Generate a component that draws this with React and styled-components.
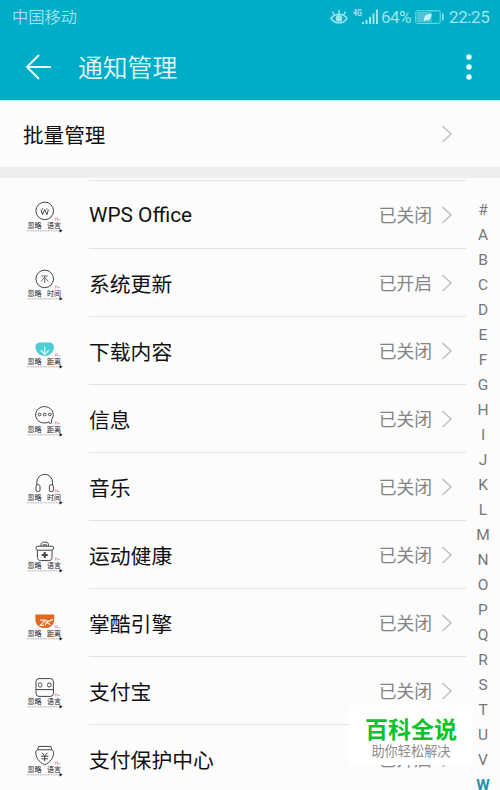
import styled, { createGlobalStyle } from 'styled-components';


const GlobalStyle = createGlobalStyle`
    * {
        box-sizing: border-box;
    }

    body {
        margin: 0;
        background-color: #fcfcfc;
        font-family: Roboto, "Noto Sans CJK SC", sans-serif;
    }
`;

// Styled components

const Screen = styled.div`
    position: relative;
    width: 500px;
    height: 790px;
    overflow: hidden;
    display: flex;
    flex-direction: column;
    background-color: #fcfcfc;
`;

const Header = styled.header`
    flex: none;
    height: 101px;
    background-color: #00adc7;
    border-bottom: 1px solid #a5fbff;
`;

const StatusBar = styled.div`
    height: 34px;
    padding: 0 11px 0 12px;
    display: flex;
    align-items: center;
    color: #9be6ef;
    font-size: 16.5px;
    white-space: nowrap;
`;

const Carrier = styled.span`
    flex: 1;
    padding-top: 2px;
    font-size: 16.3px;
    font-weight: 350;
    line-height: 34px;
`;

const StatusText = styled.span`
    width: ${props => props.$width}px;
    margin-left: ${props => props.$gap}px;
    font-size: 17px;
    line-height: 34px;
    letter-spacing: ${props => props.$spacing || 0}px;
`;

const StatusIcon = styled.svg`
    flex: none;
    margin-left: ${props => props.$gap || 0}px;
`;

const TitleBar = styled.div`
    height: 66px;
    padding: 0 28px 0 25px;
    display: flex;
    align-items: center;
`;

const Title = styled.h1`
    flex: 1;
    margin: 0 0 0 27px;
    padding-top: 4px;
    color: #e3fbfd;
    font-size: 24.8px;
    font-weight: 350;
    line-height: 62px;
`;

const BatchRow = styled.div`
    flex: none;
    height: 66px;
    padding: 0 47px 0 23px;
    display: flex;
    align-items: center;
    justify-content: space-between;
    color: #111;
    font-size: 20.6px;
`;

const Band = styled.div`
    flex: none;
    height: 11px;
    background-color: #eee;
`;

const Content = styled.div`
    flex: 1;
    min-height: 0;
    display: flex;
`;

const List = styled.ul`
    width: 466px;
    margin: 0;
    padding: 2px 0 0;
    list-style: none;
`;

const Row = styled.li`
    height: 68px;
    display: flex;
`;

const AppIcon = styled.svg`
    flex: none;
    margin: 20px 24px 0 25px;
`;

const RowBody = styled.div`
    flex: 1;
    padding: 0 13px 0 0;
    display: flex;
    align-items: center;
    border-top: 1px solid #e2e2e2;
    white-space: nowrap;
`;

const AppName = styled.span`
    flex: 1;
    color: #111;
    font-size: 20.8px;
`;

const State = styled.span`
    margin-right: 9px;
    padding-bottom: 2px;
    color: #858585;
    font-size: 17.8px;
`;

const Index = styled.nav`
    flex: 1;
    padding-top: 20px;
    display: flex;
    flex-direction: column;
    align-items: center;
`;

const Letter = styled.span`
    flex: none;
    height: 25px;
    color: ${props => props.$active ? '#149aa8' : '#777'};
    font-size: 15.5px;
    font-weight: ${props => props.$active ? 700 : 400};
    line-height: 25px;
`;

const Watermark = styled.div`
    position: absolute;
    left: 349px;
    top: 705px;
    width: 124px;
    height: 60px;
    padding-top: 13px;
    display: flex;
    flex-direction: column;
    align-items: center;
    background-color: #fff;
    white-space: nowrap;
`;

const WatermarkName = styled.strong`
    color: #08c22e;
    font-size: 23px;
    font-weight: 700;
    line-height: 25px;
`;

const WatermarkText = styled.span`
    color: #8c8c8c;
    font-size: 13.2px;
    line-height: 17px;
`;


// Drawings for each app, on a 40x34 canvas above the caption

const glyphs = {
    wps: (
        <>
            <circle cx="19.7" cy="10.9" r="8.8" />
            <path d="M16 9.8l1.5 4.8 2.2-5 2.2 5 1.5-4.8M17.6 8.4v1.4M21.8 8.4v1.4" />
        </>
    ),
    update: (
        <>
            <circle cx="19.7" cy="10.9" r="8.8" />
            <path d="M16.5 8h6.4M19.7 8.4v6.4M19.4 9.5l-3.4 4M20 9.5l3.4 4" strokeWidth="0.8" />
        </>
    ),
    download: (
        <>
            <path d="M14.5 6.5h10.4c2.6 0 4.1 2.2 4.1 4.6 0 5-4.4 8.9-9.3 8.9s-9.3-3.9-9.3-8.9c0-2.4 1.5-4.6 4.1-4.6z" fill="#4fcdd3" stroke="none" />
            <path d="M19.7 10.5v8M15.5 14.2l4.2 4.3 4.2-4.3" stroke="#e9ffff" strokeWidth="1.1" />
        </>
    ),
    message: (
        <>
            <path d="M24 17.8a8.8 8.2 0 1 1 2.4-2l.2 2.8-1.2 1.4-1.4-2.2" />
            <circle cx="14.6" cy="10.5" r="1.3" />
            <circle cx="19.7" cy="10.5" r="1.3" />
            <circle cx="24.8" cy="10.5" r="1.3" />
        </>
    ),
    music: (
        <>
            <path d="M11.8 13v-2.6a7.9 8.1 0 0 1 15.8 0V13" />
            <rect x="11" y="12.7" width="4" height="7" rx="1.8" />
            <rect x="24.4" y="12.7" width="4" height="7" rx="1.8" />
        </>
    ),
    health: (
        <>
            <path d="M16 6V4.6c0-1.6 1-2.4 2.4-2.4H21c1.4 0 2.4.8 2.4 2.4V6M18 6V4.8h3.4V6" />
            <rect x="10.9" y="6.2" width="17.8" height="4" rx="2" />
            <path d="M12.4 10.4v7c0 2 1.2 3.2 3.2 3.2h8.2c2 0 3.2-1.2 3.2-3.2v-7" />
            <path d="M19.7 12v6M16.7 15h6" strokeWidth="2" />
        </>
    ),
    engine: (
        <>
            <path d="M10.4 6.4h18.8v4.8c0 5.4-4 8.8-9.4 8.8s-9.4-3.4-9.4-8.8z" fill="#e2661d" stroke="none" />
            <path d="M15 12.2h5.6l-5.2 5.2h3.8M28 11.4l-6.8 3M22.2 12.4l-2 5M21.6 14.4l4 2.4" stroke="#fff3ea" strokeWidth="1.2" />
        </>
    ),
    alipay: (
        <>
            <rect x="11" y="2.6" width="17.4" height="17.8" rx="3" />
            <path d="M11 13.6h17.4" />
            <rect x="13.4" y="7" width="3.4" height="4" rx="1.4" />
            <rect x="22.6" y="7" width="3.4" height="4" rx="1.4" />
        </>
    ),
    protect: (
        <>
            <path d="M13.6 2.4h12.2l1 3.4h-14.2z" />
            <path d="M12.6 5.8l-1.8 1.6c-.4 6 3.2 11 8.9 13.4 5.7-2.4 9.3-7.4 8.9-13.4l-1.8-1.6" />
            <path d="M17 8.8l2.7 3 2.7-3M16 12.2h7.4M16.4 14.8h6.6M19.7 12v5.4" />
        </>
    ),
};

const apps = [
    { name: 'WPS Office', glyph: 'wps', word: '语言', state: '已关闭' },
    { name: '系统更新', glyph: 'update', word: '时间', state: '已开启' },
    { name: '下载内容', glyph: 'download', word: '距离', state: '已关闭' },
    { name: '信息', glyph: 'message', word: '距离', state: '已关闭' },
    { name: '音乐', glyph: 'music', word: '时间', state: '已关闭' },
    { name: '运动健康', glyph: 'health', word: '语言', state: '已关闭' },
    { name: '掌酷引擎', glyph: 'engine', word: '距离', state: '已关闭' },
    { name: '支付宝', glyph: 'alipay', word: '语言', state: '已关闭' },
    { name: '支付保护中心', glyph: 'protect', word: '语言', state: '已开启' },
];

const letters = '#ABCDEFGHIJKLMNOPQRSTUVW'.split('');


function Chevron() {
    return (
        <svg width="12" height="18" viewBox="0 0 12 18" fill="none" stroke="#c2c2c2" strokeWidth="1.6">
            <path d="M1.5 1l8.5 8-8.5 8" />
        </svg>
    );
}

function ThemedIcon({glyph, word}) {
    // Line drawing with the small caption and the arrow under it

    return (
        <AppIcon width="40" height="34" viewBox="0 0 40 34">
            <g fill="none" stroke="#444" strokeWidth="1">
                {glyphs[glyph]}
            </g>
            <path d="M30.4 17.4v3M30.4 18.8l2-.8v2.2M32.6 19.6h2.4" fill="none" stroke="#f0a0ac" strokeWidth="1" />
            <g fill="#222" fontSize="7" fontFamily='"Noto Sans CJK SC", sans-serif'>
                <text x="2.6" y="28.2">忽略</text>
                <text x="22" y="28.2">{word}</text>
            </g>
            <path d="M2 30.8h33" stroke="#aaa" strokeWidth="0.8" strokeDasharray="2 0.6" />
            <path d="M34.6 29l3 1.8-3 1.8z" fill="#111" />
        </AppIcon>
    );
}

function App() {
    return (
        <Screen>
            <GlobalStyle />
            <Header>
                <StatusBar>
                    <Carrier>中国移动</Carrier>
                    <StatusIcon width="18" height="18" viewBox="0 0 18 18" fill="none" stroke="#9be6ef" strokeWidth="1.4">
                        <path d="M1 10.5c2-3 5-4.2 8-4.2s6 1.2 8 4.2c-2 3-5 4.4-8 4.4s-6-1.4-8-4.4z" />
                        <path d="M9 5.8V2M4.4 6.8L2.4 3.6M13.6 6.8l2-3.2" />
                        <circle cx="9" cy="10.4" r="2.6" fill="#9be6ef" />
                    </StatusIcon>
                    <StatusIcon $gap={5} width="26" height="18" viewBox="0 0 26 18" fill="#9be6ef">
                        <text x="0" y="8.4" fontSize="8.5" fontWeight="700" textLength="9" lengthAdjust="spacingAndGlyphs">4G</text>
                        <rect x="9" y="14" width="2" height="2" />
                        <rect x="12.5" y="12" width="2" height="4" />
                        <rect x="16" y="9" width="2" height="7" />
                        <rect x="19.5" y="5.5" width="2" height="10.5" />
                        <rect x="23" y="1.5" width="2" height="14.5" />
                    </StatusIcon>
                    <StatusText $gap={2} $width={30} $spacing={-0.5}>64%</StatusText>
                    <StatusIcon $gap={4} width="29" height="16" viewBox="0 0 29 16">
                        <rect x="0.8" y="1.8" width="24.4" height="12.6" rx="1.5" fill="none" stroke="#7fdce8" />
                        <rect x="2" y="3" width="14.5" height="10.2" fill="#4cc6d7" />
                        <path d="M9 11.8c-.4-4.6 2.4-6.8 7.6-7-.2 5-2.2 7.4-6 6.2l-1 1.2z" fill="#c6f5f9" />
                        <rect x="27" y="4.5" width="1.6" height="7" fill="#9be6ef" />
                    </StatusIcon>
                    <StatusText $gap={5} $width={40} $spacing={-0.4}>22:25</StatusText>
                </StatusBar>
                <TitleBar>
                    <svg width="26" height="26" viewBox="0 0 26 26" fill="none" stroke="#e3fbfd" strokeWidth="2">
                        <path d="M14 1L2 13l12 12M2 13h24" />
                    </svg>
                    <Title>通知管理</Title>
                    <svg width="6" height="28" viewBox="0 0 6 28" fill="#f2ffff">
                        <circle cx="3" cy="4" r="2.7" />
                        <circle cx="3" cy="14" r="2.7" />
                        <circle cx="3" cy="24" r="2.7" />
                    </svg>
                </TitleBar>
            </Header>
            <BatchRow>
                <span>批量管理</span>
                <Chevron />
            </BatchRow>
            <Band />
            <Content>
                <List>
                    {apps.map(app => (
                        <Row key={app.name}>
                            <ThemedIcon glyph={app.glyph} word={app.word} />
                            <RowBody>
                                <AppName>{app.name}</AppName>
                                <State>{app.state}</State>
                                <Chevron />
                            </RowBody>
                        </Row>
                    ))}
                </List>
                <Index>
                    {letters.map(letter => (
                        <Letter key={letter} $active={letter === 'W'}>{letter}</Letter>
                    ))}
                </Index>
            </Content>
            <Watermark>
                <WatermarkName>百科全说</WatermarkName>
                <WatermarkText>助你轻松解决</WatermarkText>
            </Watermark>
        </Screen>
    );
}

export default App;
